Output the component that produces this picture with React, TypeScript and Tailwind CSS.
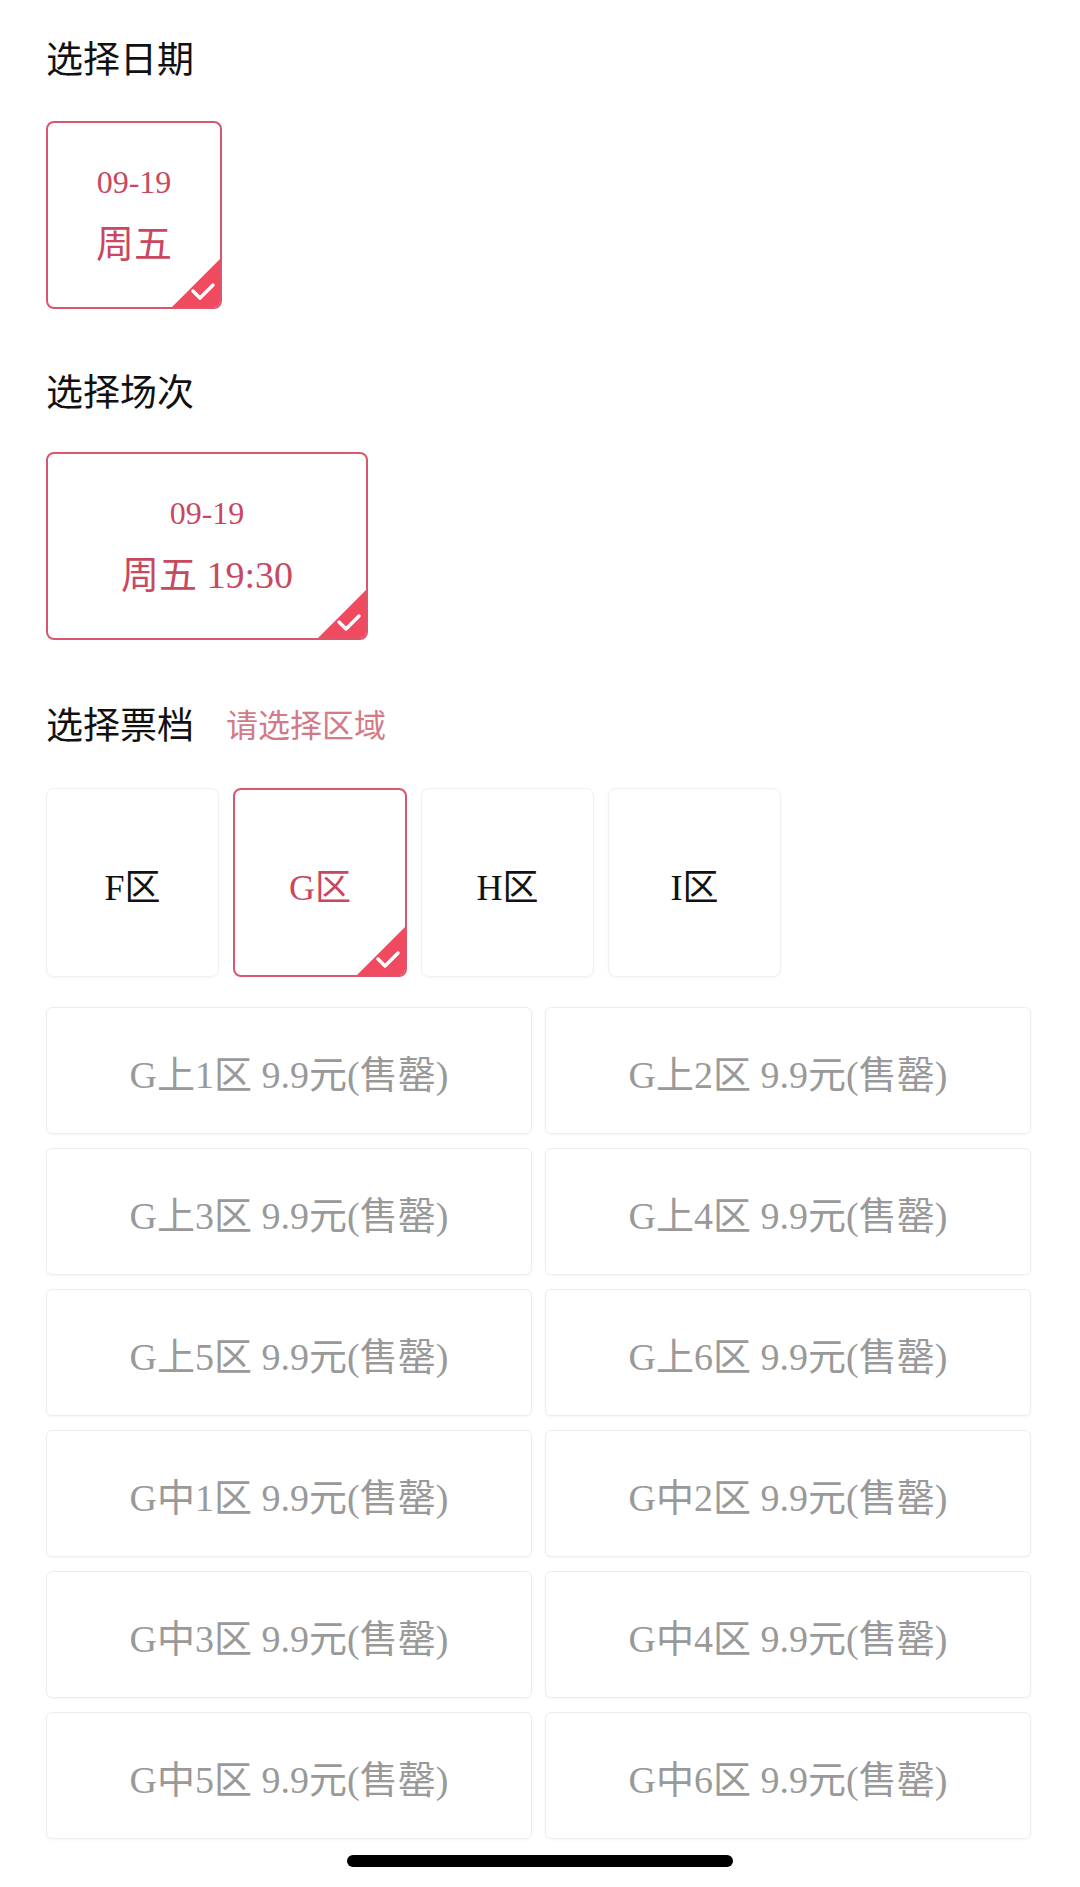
import React from 'react';

const serif = "font-['Liberation_Serif','Noto_Sans_CJK_SC',serif]";
const sans = "font-['Noto_Sans_CJK_SC',sans-serif]";

const zones = ['F区', 'G区', 'H区', 'I区'];
const tickets = ['G上1区', 'G上2区', 'G上3区', 'G上4区', 'G上5区', 'G上6区', 'G中1区', 'G中2区', 'G中3区', 'G中4区', 'G中5区', 'G中6区'];

function Corner() {
  return (
    <svg className="absolute right-0 bottom-0" width="48" height="48" viewBox="0 0 48 48">
      <polygon points="48,0 48,48 0,48" fill="#ef4a5f" />
      <polyline points="21,32 28,39 41,26" fill="none" stroke="#fff" strokeWidth="3.5" strokeLinecap="round" strokeLinejoin="round" />
    </svg>
  );
}

export default function App() {
  return (
    <div className="relative w-[1080px] h-[1887px] bg-white pl-[46px] pr-[49px] overflow-hidden">
      {/* 日期 */}
      <h2 className={`${sans} pt-[39px] text-[37px] leading-[37px] text-[#111]`}>选择日期</h2>
      <div className={`${serif} relative mt-[45px] w-[176px] h-[188px] rounded-[8px] border-2 border-[#d9566d] overflow-hidden flex flex-col items-center justify-center text-[#c9485f]`}>
        <div className="text-[32px] leading-[40px]">09-19</div>
        <div className="text-[38px] leading-[50px] mt-[17px]">周五</div>
        <Corner />
      </div>

      {/* 场次 */}
      <h2 className={`${sans} mt-[63px] text-[37px] leading-[37px] text-[#111]`}>选择场次</h2>
      <div className={`${serif} relative mt-[43px] w-[322px] h-[188px] rounded-[8px] border-2 border-[#d9566d] overflow-hidden flex flex-col items-center justify-center text-[#c9485f]`}>
        <div className="text-[32px] leading-[40px]">09-19</div>
        <div className="text-[38px] leading-[50px] mt-[17px]">周五 19:30</div>
        <Corner />
      </div>

      {/* 票档 */}
      <div className={`${sans} mt-[65px] flex items-center`}>
        <h2 className="text-[37px] leading-[37px] text-[#111]">选择票档</h2>
        <span className="ml-[32px] text-[32px] leading-[37px] text-[#d27a86]">请选择区域</span>
      </div>

      <div className="mt-[46px] flex gap-[14px]">
        {zones.map((z, i) =>
          i === 1 ? (
            <div key={z} className={`${serif} relative w-[174px] h-[189px] pt-[10px] rounded-[8px] border-2 border-[#d9566d] overflow-hidden flex items-center justify-center text-[36px] text-[#c9485f]`}>
              {z}
              <Corner />
            </div>
          ) : (
            <div key={z} className={`${serif} w-[173px] h-[189px] pt-[10px] rounded-[8px] border border-[#f0f0f0] shadow-[0_1px_3px_rgba(0,0,0,0.04)] flex items-center justify-center text-[36px] text-[#111]`}>
              {z}
            </div>
          )
        )}
      </div>

      <div className="mt-[30px] grid grid-cols-2 gap-x-[13px] gap-y-[14px]">
        {tickets.map((t) => (
          <div key={t} className={`${serif} h-[127px] pt-[10px] rounded-[6px] border border-[#ededed] shadow-[0_1px_3px_rgba(0,0,0,0.04)] flex items-center justify-center text-[38px] text-[#999]`}>
            {t} 9.9元(售罄)
          </div>
        ))}
      </div>

      {/* home indicator */}
      <div className="absolute left-[347px] top-[1855px] w-[386px] h-[12px] rounded-full bg-black" />
    </div>
  );
}
